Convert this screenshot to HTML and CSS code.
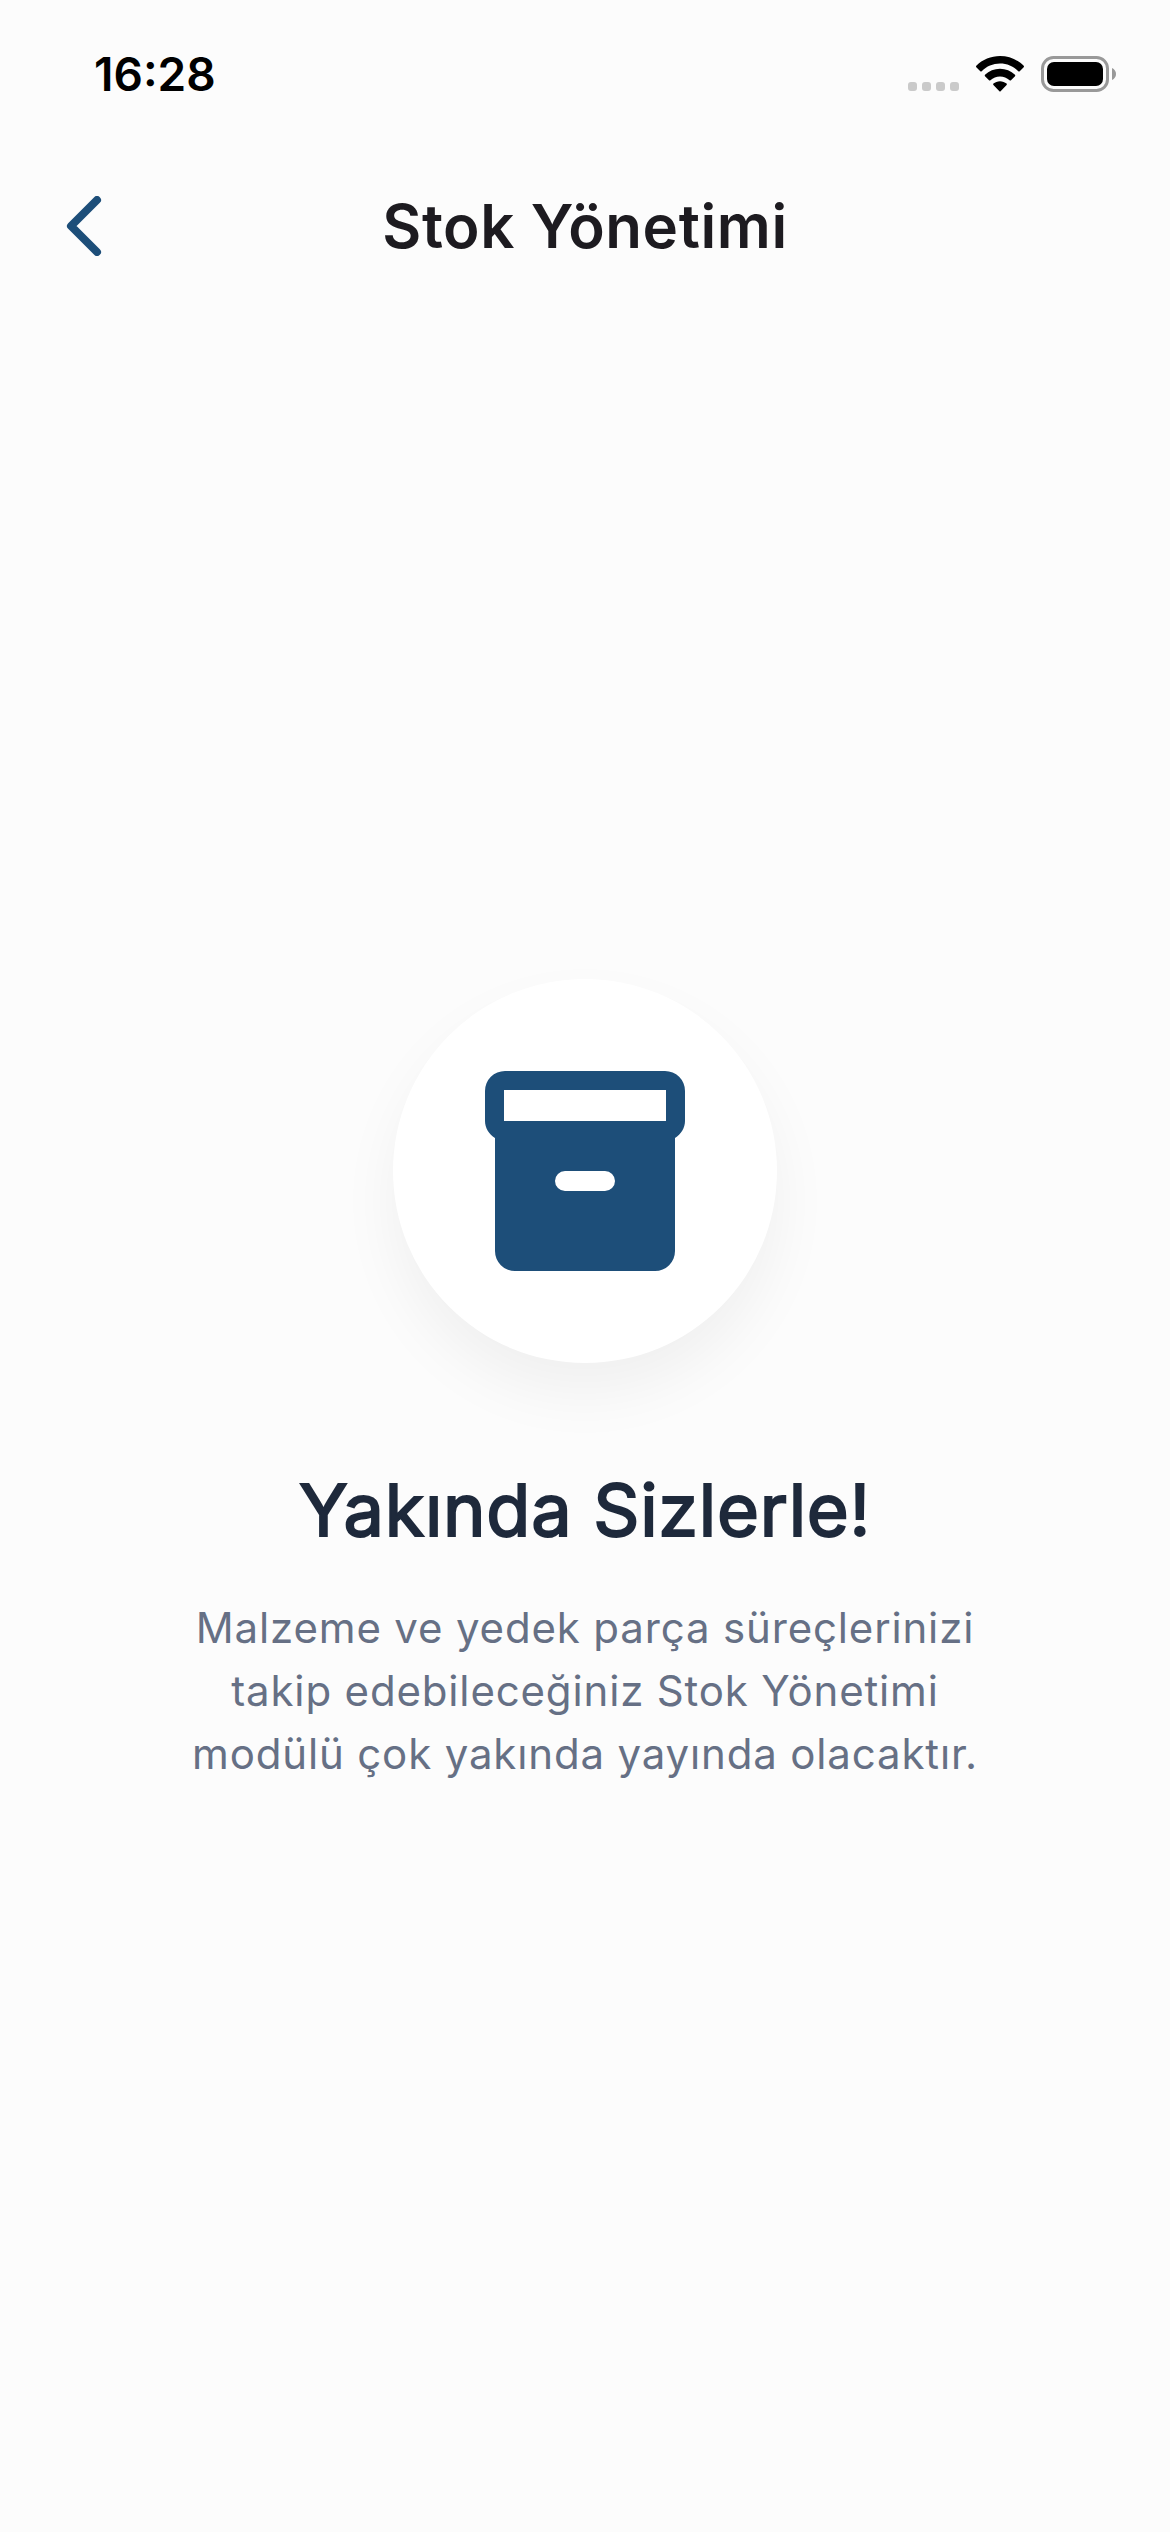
FILE: index.html
```html
<!DOCTYPE html>
<html lang="tr">
<head>
    <meta charset="UTF-8">
    <meta name="viewport" content="width=device-width, initial-scale=1.0">
    <title>Stok Yönetimi</title>
    <link rel="stylesheet" href="styles.css">
</head>
<body>
    <div class="status-bar">
        <span class="clock">16:28</span>
        <div class="status-icons">
            <svg class="signal" viewBox="0 0 51 9" aria-hidden="true">
                <rect x="0" y="0" width="9" height="9" rx="3"/>
                <rect x="14" y="0" width="9" height="9" rx="3"/>
                <rect x="28" y="0" width="9" height="9" rx="3"/>
                <rect x="42" y="0" width="9" height="9" rx="3"/>
            </svg>
            <svg class="wifi" viewBox="0 0 48 36" aria-hidden="true">
                <path d="M24 0C15 0 6.500 3.500 .3 9.800c-.4.400-.4 1 0 1.400l4 4c.4.400 1 .4 1.400 0C10.500 10.400 17 7.600 24 7.600s13.500 2.800 18.300 7.600c.4.400 1 .4 1.400 0l4-4c.4-.4.4-1 0-1.400C41.500 3.500 33 0 24 0z"/>
                <path d="M24 12.800c-5.700 0-11 2.200-15 6-.4.400-.4 1 0 1.400l4 4c.4.400 1 .4 1.400 0 2.600-2.400 6-3.800 9.600-3.800s7 1.400 9.600 3.800c.4.400 1 .4 1.400 0l4-4c.4-.4.4-1 0-1.400-4-3.800-9.300-6-15-6z"/>
                <path d="M24 25.200c-2.500 0-4.800.9-6.600 2.400-.4.400-.4 1 0 1.400l6 6.300c.3.400.9.4 1.200 0l6-6.300c.4-.4.4-1 0-1.400-1.800-1.500-4.100-2.400-6.600-2.400z"/>
            </svg>
            <svg class="battery" viewBox="0 0 75 36" aria-hidden="true">
                <rect class="battery-shell" x="1.500" y="1.500" width="65" height="33" rx="11"/>
                <rect x="6" y="6" width="56" height="24" rx="7"/>
                <path class="battery-cap" d="M71 12v12c2.500-1 4-3.400 4-6s-1.500-5-4-6z"/>
            </svg>
        </div>
    </div>

    <header class="app-bar">
        <button class="back-button" type="button" aria-label="Geri">
            <svg viewBox="0 0 36 60" aria-hidden="true">
                <path d="M31 4L5 30l26 26"/>
            </svg>
        </button>
        <h1>Stok Yönetimi</h1>
    </header>

    <main class="coming-soon">
        <div class="icon-circle">
            <svg viewBox="0 0 200 200" aria-hidden="true">
                <path fill-rule="evenodd" d="M20 0h160a20 20 0 0 1 20 20v30c0 7-4 13-10 17v113a20 20 0 0 1-20 20H30a20 20 0 0 1-20-20V67C4 63 0 57 0 50V20A20 20 0 0 1 20 0zM19 19v31h162V19zM80 100a10 10 0 0 0 0 20h40a10 10 0 0 0 0-20z"/>
            </svg>
        </div>
        <h2>Yakında Sizlerle!</h2>
        <p>Malzeme ve yedek parça süreçlerinizi takip edebileceğiniz Stok Yönetimi modülü çok yakında yayında olacaktır.</p>
    </main>
</body>
</html>
```
FILE: styles.css
```css
:root {
    --bg-color: #fcfcfc;
    --primary-color: #1d4e79;
    --title-color: #1d1b20;
    --heading-color: #1e293b;
    --text-color: #667085;
}

* {
    box-sizing: border-box;
}

body {
    margin: 0;
    min-height: 100vh;
    display: flex;
    flex-direction: column;
    background-color: var(--bg-color);
    font-family: Inter, 'Liberation Sans', sans-serif;
    font-optical-sizing: none;
}

.status-bar {
    display: flex;
    justify-content: space-between;
    align-items: center;
    height: 148px;
    padding: 0 54px 0 94px;
}

.clock {
    font-size: 46px;
    font-weight: 600;
}

.status-icons {
    display: flex;
    align-items: center;
    gap: 17px;
}

.signal {
    width: 51px;
    height: 9px;
    margin-top: 25px;
    fill: #cacaca;
}

.wifi {
    width: 48px;
    height: 36px;
}

.battery {
    width: 75px;
    height: 36px;
}

.battery-shell {
    fill: none;
    stroke: #999999;
    stroke-width: 3;
}

.battery-cap {
    fill: #999999;
}

.app-bar {
    display: grid;
    grid-template-columns: 168px 1fr 168px;
    align-items: center;
    height: 156px;
}

.back-button {
    width: 168px;
    height: 144px;
    display: flex;
    align-items: center;
    justify-content: center;
    padding: 0;
    border: none;
    background: none;
    cursor: pointer;
}

.back-button svg {
    width: 36px;
    height: 60px;
    fill: none;
    stroke: var(--primary-color);
    stroke-width: 8;
    stroke-linecap: round;
    stroke-linejoin: round;
}

h1 {
    margin: 0;
    text-align: center;
    font-size: 60px;
    font-weight: 600;
    letter-spacing: 0.01em;
    color: var(--title-color);
}

.coming-soon {
    flex: 1;
    display: flex;
    flex-direction: column;
    align-items: center;
    justify-content: center;
    padding: 0 96px 72px;
    text-align: center;
}

.icon-circle {
    display: flex;
    align-items: center;
    justify-content: center;
    width: 384px;
    height: 384px;
    border-radius: 50%;
    background-color: #ffffff;
    box-shadow: 0 30px 60px rgba(0, 0, 0, 0.05);
}

.icon-circle svg {
    width: 200px;
    height: 200px;
    fill: var(--primary-color);
}

h2 {
    margin: 96px 0 36px;
    font-size: 72px;
    line-height: 101px;
    font-weight: 400;
    letter-spacing: 0.01em;
    -webkit-text-stroke: 2px var(--heading-color);
    color: var(--heading-color);
}

p {
    max-width: 820px;
    margin: 0;
    font-size: 42px;
    line-height: 63px;
    letter-spacing: 0.02em;
    color: var(--text-color);
}
```
